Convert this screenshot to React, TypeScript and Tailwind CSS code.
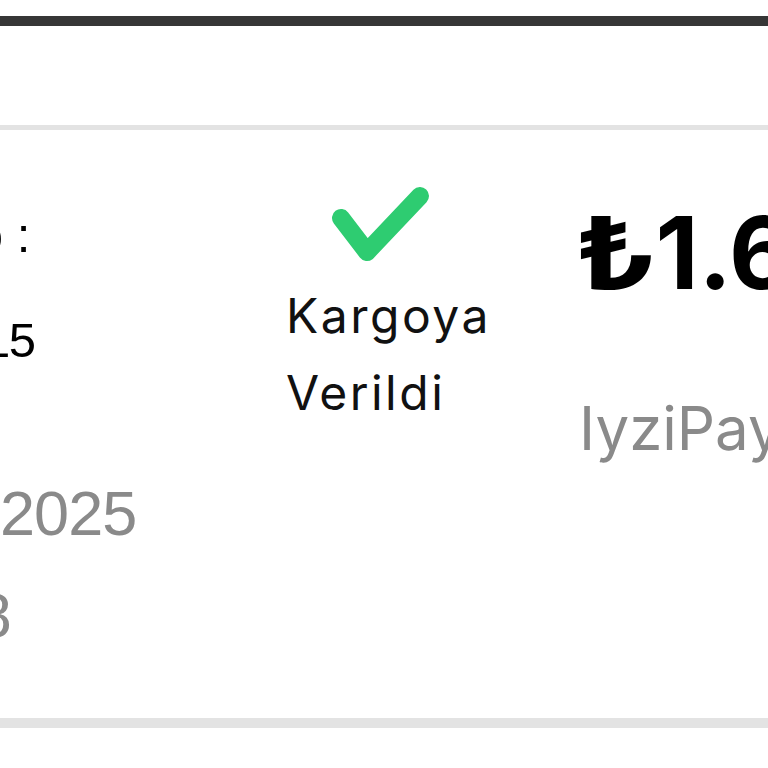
import React from "react";

function CheckIcon() {
  return (
    <svg width="100" height="80" viewBox="0 0 100 80" fill="none">
      <polyline
        points="10,31 36,65 89,9"
        stroke="#2ecc71"
        strokeWidth="18"
        strokeLinecap="round"
        strokeLinejoin="round"
      />
    </svg>
  );
}

function App() {
  return (
    <div className="w-[768px] h-[768px] bg-white overflow-hidden">
      <div className="h-4" />
      <div className="h-[10px] bg-[#363636]" />
      <div className="h-[99px]" />
      <div className="h-[603px] border-t-[5px] border-b-[10px] border-[#e3e3e3] flex">
        {/* order info */}
        <div className="-ml-[223px] w-[420px] shrink-0 flex flex-col items-start pt-[81px] font-['Liberation_Sans',Arial,sans-serif]">
          <p className="text-[49px] leading-[49px] text-black whitespace-nowrap">Sipariş No :</p>
          <p className="mt-[56px] text-[49px] leading-[49px] tracking-[-1.5px] text-black whitespace-nowrap">#100247815</p>
          <p className="mt-[117px] text-[63px] leading-[63px] tracking-[-1px] text-[#8a8a8a] whitespace-nowrap">12 Mart 2025</p>
          <p className="mt-[39px] text-[63px] leading-[63px] tracking-[-1.5px] text-[#8a8a8a] whitespace-nowrap">20:14:38</p>
        </div>

        {/* status */}
        <div className="w-[381px] shrink-0 flex flex-col items-start pl-[89px] pt-[57px] font-['Inter',sans-serif]">
          <div className="ml-[45px]">
            <CheckIcon />
          </div>
          <p className="mt-[10px] text-[48px] leading-[77px] tracking-[2.5px] text-[#111]">
            Kargoya
            <br />
            Verildi
          </p>
        </div>

        {/* total */}
        <div className="flex-1 flex flex-col items-start pt-[73px] font-['Inter',sans-serif] whitespace-nowrap">
          <p className="-ml-[4px] text-[100px] leading-[100px] font-bold text-black">
            <span className="inline-block origin-left scale-x-[1.3] mr-[17px]">₺</span>1.689,90
          </p>
          <p className="mt-[95px] ml-[1px] text-[60px] leading-[60px] text-[#8a8a8a]">IyziPay</p>
        </div>
      </div>
    </div>
  );
}

export default App;
